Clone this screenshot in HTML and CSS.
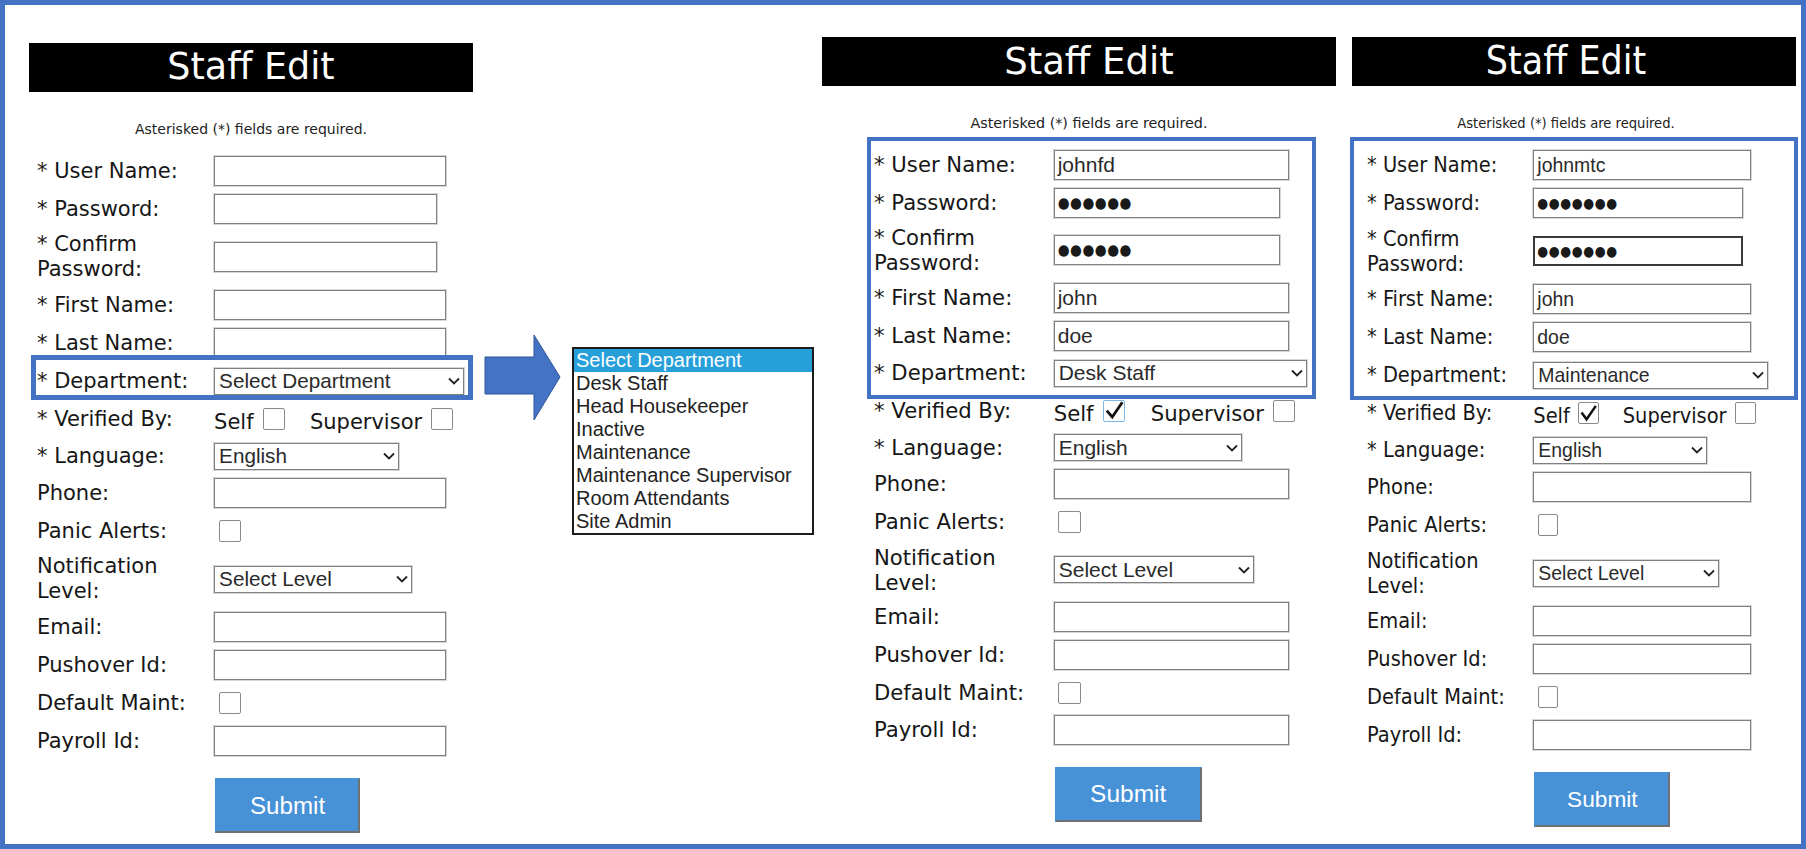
FILE: index.html
```html
<!DOCTYPE html>
<html>
<head>
<meta charset="utf-8">
<title>Staff Edit</title>
<link rel="stylesheet" href="styles.css">
</head>
<body>
<div class="frame">

  <section class="panel p1">
    <h1 class="bar"><span>Staff Edit</span></h1>
    <p class="note">Asterisked (*) fields are required.</p>
    <div class="form">
      <div class="row"><span class="lbl">* User Name:</span><span class="field w-text"></span></div>
      <div class="row"><span class="lbl">* Password:</span><span class="field w-pw"></span></div>
      <div class="row tall"><span class="lbl">* Confirm<br>Password:</span><span class="field w-pw"></span></div>
      <div class="row"><span class="lbl">* First Name:</span><span class="field w-text"></span></div>
      <div class="row"><span class="lbl">* Last Name:</span><span class="field w-text"></span></div>
      <div class="row hl"><span class="lbl">* Department:</span><span class="sel w-dept"><span>Select Department</span><svg class="chev" viewBox="0 0 12 8"><polyline points="1,1.5 6,6.5 11,1.5"/></svg></span></div>
      <div class="row"><span class="lbl">* Verified By:</span><span class="verify"><span class="opt">Self</span><span class="cb"></span><span class="opt sup">Supervisor</span><span class="cb"></span></span></div>
      <div class="row short"><span class="lbl">* Language:</span><span class="sel w-lang"><span>English</span><svg class="chev" viewBox="0 0 12 8"><polyline points="1,1.5 6,6.5 11,1.5"/></svg></span></div>
      <div class="row"><span class="lbl">Phone:</span><span class="field w-text"></span></div>
      <div class="row"><span class="lbl">Panic Alerts:</span><span class="cb solo"></span></div>
      <div class="row tall"><span class="lbl">Notification<br>Level:</span><span class="sel w-notif"><span>Select Level</span><svg class="chev" viewBox="0 0 12 8"><polyline points="1,1.5 6,6.5 11,1.5"/></svg></span></div>
      <div class="row"><span class="lbl">Email:</span><span class="field w-text"></span></div>
      <div class="row"><span class="lbl">Pushover Id:</span><span class="field w-text"></span></div>
      <div class="row"><span class="lbl">Default Maint:</span><span class="cb solo"></span></div>
      <div class="row"><span class="lbl">Payroll Id:</span><span class="field w-text"></span></div>
      <button class="submit" type="button">Submit</button>
    </div>
  </section>

  <div class="pointer">
    <svg class="arrow" width="78" height="88" viewBox="0 0 78 88"><polygon points="1,23 50,23 50,1 76,43 50,86 50,60 1,60"/></svg>
    <div class="listbox">
      <div class="item on">Select Department</div>
      <div class="item">Desk Staff</div>
      <div class="item">Head Housekeeper</div>
      <div class="item">Inactive</div>
      <div class="item">Maintenance</div>
      <div class="item">Maintenance Supervisor</div>
      <div class="item">Room Attendants</div>
      <div class="item">Site Admin</div>
    </div>
  </div>

  <section class="panel p2">
    <h1 class="bar"><span>Staff Edit</span></h1>
    <p class="note">Asterisked (*) fields are required.</p>
    <div class="form">
      <div class="group">
        <div class="row"><span class="lbl">* User Name:</span><span class="field w-text">johnfd</span></div>
        <div class="row"><span class="lbl">* Password:</span><span class="field w-pw"><span class="dots">●●●●●●</span></span></div>
        <div class="row tall"><span class="lbl">* Confirm<br>Password:</span><span class="field w-pw"><span class="dots">●●●●●●</span></span></div>
        <div class="row"><span class="lbl">* First Name:</span><span class="field w-text">john</span></div>
        <div class="row"><span class="lbl">* Last Name:</span><span class="field w-text">doe</span></div>
        <div class="row"><span class="lbl">* Department:</span><span class="sel w-dept"><span>Desk Staff</span><svg class="chev" viewBox="0 0 12 8"><polyline points="1,1.5 6,6.5 11,1.5"/></svg></span></div>
      </div>
      <div class="row"><span class="lbl">* Verified By:</span><span class="verify"><span class="opt">Self</span><span class="cb on focus"><svg class="tick" viewBox="0 0 22 21"><polyline points="3,10 9,17 20,1"/></svg></span><span class="opt sup">Supervisor</span><span class="cb"></span></span></div>
      <div class="row short"><span class="lbl">* Language:</span><span class="sel w-lang"><span>English</span><svg class="chev" viewBox="0 0 12 8"><polyline points="1,1.5 6,6.5 11,1.5"/></svg></span></div>
      <div class="row"><span class="lbl">Phone:</span><span class="field w-text"></span></div>
      <div class="row"><span class="lbl">Panic Alerts:</span><span class="cb solo"></span></div>
      <div class="row tall"><span class="lbl">Notification<br>Level:</span><span class="sel w-notif"><span>Select Level</span><svg class="chev" viewBox="0 0 12 8"><polyline points="1,1.5 6,6.5 11,1.5"/></svg></span></div>
      <div class="row"><span class="lbl">Email:</span><span class="field w-text"></span></div>
      <div class="row"><span class="lbl">Pushover Id:</span><span class="field w-text"></span></div>
      <div class="row"><span class="lbl">Default Maint:</span><span class="cb solo"></span></div>
      <div class="row"><span class="lbl">Payroll Id:</span><span class="field w-text"></span></div>
      <button class="submit" type="button">Submit</button>
    </div>
  </section>

  <section class="panel p3">
    <h1 class="bar"><span>Staff Edit</span></h1>
    <p class="note">Asterisked (*) fields are required.</p>
    <div class="form">
      <div class="group">
        <div class="row"><span class="lbl">* User Name:</span><span class="field w-text">johnmtc</span></div>
        <div class="row"><span class="lbl">* Password:</span><span class="field w-pw"><span class="dots">●●●●●●●</span></span></div>
        <div class="row tall"><span class="lbl">* Confirm<br>Password:</span><span class="field w-pw active"><span class="dots">●●●●●●●</span></span></div>
        <div class="row"><span class="lbl">* First Name:</span><span class="field w-text">john</span></div>
        <div class="row"><span class="lbl">* Last Name:</span><span class="field w-text">doe</span></div>
        <div class="row"><span class="lbl">* Department:</span><span class="sel w-dept"><span>Maintenance</span><svg class="chev" viewBox="0 0 12 8"><polyline points="1,1.5 6,6.5 11,1.5"/></svg></span></div>
      </div>
      <div class="row"><span class="lbl">* Verified By:</span><span class="verify"><span class="opt">Self</span><span class="cb on"><svg class="tick" viewBox="0 0 22 21"><polyline points="3,10 9,18 20,2"/></svg></span><span class="opt sup">Supervisor</span><span class="cb"></span></span></div>
      <div class="row short"><span class="lbl">* Language:</span><span class="sel w-lang"><span>English</span><svg class="chev" viewBox="0 0 12 8"><polyline points="1,1.5 6,6.5 11,1.5"/></svg></span></div>
      <div class="row"><span class="lbl">Phone:</span><span class="field w-text"></span></div>
      <div class="row"><span class="lbl">Panic Alerts:</span><span class="cb solo"></span></div>
      <div class="row tall"><span class="lbl">Notification<br>Level:</span><span class="sel w-notif"><span>Select Level</span><svg class="chev" viewBox="0 0 12 8"><polyline points="1,1.5 6,6.5 11,1.5"/></svg></span></div>
      <div class="row"><span class="lbl">Email:</span><span class="field w-text"></span></div>
      <div class="row"><span class="lbl">Pushover Id:</span><span class="field w-text"></span></div>
      <div class="row"><span class="lbl">Default Maint:</span><span class="cb solo"></span></div>
      <div class="row"><span class="lbl">Payroll Id:</span><span class="field w-text"></span></div>
      <button class="submit" type="button">Submit</button>
    </div>
  </section>

</div>
</body>
</html>
```

FILE: styles.css
```css
* { box-sizing: border-box; }

html, body {
  margin: 0;
  background: #fff;
}

body {
  width: 1806px;
  height: 849px;
  overflow: hidden;
}

.frame {
  width: 1806px;
  height: 849px;
  border: 5px solid #4472c4;
  display: flex;
  align-items: flex-start;
  font-family: "DejaVu Sans", sans-serif;
  color: #161616;
}

/* ---------- panels ---------- */
.panel {
  --s: 1;
  --dx: 0px;
  --gap: 8px;
  --fx: 8px;
  --lf: 20px;
  --tf: 36px;
  --nf: 13.5px;
  --st: normal;
  flex: none;
  font-stretch: var(--st);
}

.p1 {
  --s: 1.15;
  --lf: 21px;
  --tf: 36.5px;
  --nf: 14px;
  width: 444px;
  margin: 38px 0 0 24px;
}

.p2 {
  --s: 1.167;
  --dx: 10px;
  --gap: 7.67px;
  --fx: 52px;
  --lf: 21.2px;
  --tf: 37px;
  --nf: 14.3px;
  width: 514px;
  margin: 32px 0 0 8px;
}

.p3 {
  --s: 1.08;
  --dx: -8px;
  --fx: 15px;
  --lf: 21.6px;
  --tf: 38.9px;
  --nf: 14.6px;
  --st: condensed;
  font-family: "DejaVu Sans Condensed", "DejaVu Sans", sans-serif;
  width: 444px;
  margin: 32px 0 0 16px;
}

.bar {
  margin: 0;
  height: 49px;
  background: #000;
  color: #fff;
  display: flex;
  align-items: center;
  justify-content: center;
  font-size: var(--tf);
  font-weight: normal;
  line-height: 1;
}

.bar span {
  margin-left: calc(2 * var(--dx));
}

.note {
  margin: 29px 0 0;
  text-align: center;
  text-indent: calc(2 * var(--dx));
  font-size: var(--nf);
  line-height: 16px;
  color: #222;
}

.form {
  margin: 19px 0 0 var(--fx);
  display: flex;
  flex-direction: column;
  gap: var(--gap);
}

.group {
  display: flex;
  flex-direction: column;
  gap: var(--gap);
  position: relative;
}

/* blue annotation frames */
.group::before,
.row.hl::before {
  content: "";
  position: absolute;
  border: 4px solid #4472c4;
  pointer-events: none;
  z-index: 2;
}

.p2 .group::before { inset: -13px 20px -11px -7px; }
.p3 .group::before { inset: -13px -2px -10px -17px; }
.row.hl::before { inset: -11px 0 -4px -6px; border-width: 5px; }

/* ---------- rows ---------- */
.row {
  display: grid;
  grid-template-columns: calc(154px * var(--s)) auto;
  justify-items: start;
  align-items: center;
  min-height: 30px;
  position: relative;
}

.row.tall { min-height: 50px; }
.row.short { min-height: 28px; }

.lbl {
  font-size: var(--lf);
  line-height: 24px;
  white-space: nowrap;
}

.row.tall .lbl { line-height: 25px; }

/* ---------- controls ---------- */
.field {
  display: flex;
  align-items: center;
  height: 30px;
  padding: 0 3px;
  border: 1px solid #808080;
  box-shadow: 0 0 0 1px #d6d6d6;
  background: #fff;
  font-family: "Liberation Sans", Arial, sans-serif;
  font-size: calc(18px * var(--s));
  color: #2a2a2a;
}

.field.active {
  border: 2px solid #3a3a3a;
  box-shadow: none;
  padding-left: 2px;
}

.w-text { width: calc(202px * var(--s)); }
.w-pw { width: calc(194px * var(--s)); }
.w-dept { width: calc(217px * var(--s)); height: 28px; }
.w-lang { width: calc(161px * var(--s)); }
.w-notif { width: calc(172px * var(--s)); }

.dots {
  font-family: "DejaVu Sans Condensed", "DejaVu Sans", sans-serif;
  font-stretch: condensed;
  font-size: calc(12.96px * var(--s));
  letter-spacing: 0.5px;
  color: #1a1a1a;
}

.sel {
  display: flex;
  align-items: center;
  justify-content: space-between;
  height: 27px;
  padding: 0 3px 0 4px;
  border: 1px solid #808080;
  box-shadow: 0 0 0 1px #d6d6d6;
  background: #fff;
  font-family: "Liberation Sans", Arial, sans-serif;
  font-size: calc(18px * var(--s));
  color: #2a2a2a;
  white-space: nowrap;
}

.chev {
  width: 12px;
  height: 8px;
  flex: none;
  fill: none;
  stroke: #222;
  stroke-width: 1.8;
}

.cb {
  display: block;
  flex: none;
  width: calc(19px * var(--s));
  height: 22px;
  border: 1px solid #8a8a8a;
  border-radius: 2px;
  background: #fff;
}

.cb.solo { margin-left: calc(4px * var(--s)); }
.cb.focus { border-color: #7db7e6; }

.tick {
  display: block;
  width: 100%;
  height: 100%;
  overflow: visible;
  fill: none;
  stroke: #111;
  stroke-width: 3;
  stroke-linejoin: miter;
}

.verify {
  display: flex;
  align-items: center;
}

.opt {
  font-size: var(--lf);
  line-height: 24px;
  padding-top: 6px;
  margin-right: calc(8px * var(--s));
}

.opt.sup { margin-left: calc(22px * var(--s)); }

.submit {
  align-self: flex-start;
  margin: 14px 0 0 calc(154px * var(--s) + 1px);
  width: calc(126px * var(--s));
  height: 55px;
  padding: 0;
  background: #4791d6;
  color: #fff;
  border: 2px solid;
  border-color: #4791d6 #707070 #707070 #4791d6;
  font-family: "Liberation Sans", Arial, sans-serif;
  font-size: calc(21px * var(--s));
}

/* ---------- dropdown illustration ---------- */
.pointer {
  flex: none;
  display: flex;
  align-items: flex-start;
  margin: 329px 0 0 11px;
}

.arrow {
  flex: none;
  fill: #4472c4;
  stroke: #2f5597;
  stroke-width: 1;
}

.listbox {
  flex: none;
  width: 242px;
  margin: 13px 0 0 10px;
  border: 2px solid #1c1c1c;
  background: #fff;
  font-family: "Liberation Sans", Arial, sans-serif;
  font-size: 20px;
  color: #222;
}

.item {
  height: 23px;
  line-height: 23px;
  padding-left: 2px;
  white-space: nowrap;
}

.item.on {
  background: #27a0da;
  color: #fff;
}
```
